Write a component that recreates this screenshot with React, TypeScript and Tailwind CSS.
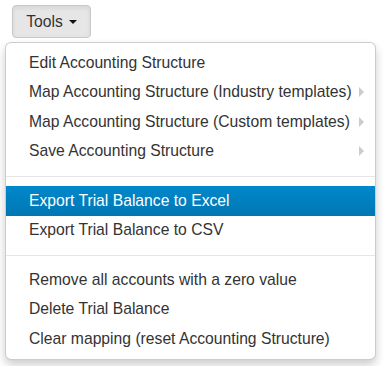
import React from "react";

type Item = { label: string; submenu?: boolean; active?: boolean };

const groups: Item[][] = [
  [
    { label: "Edit Accounting Structure" },
    { label: "Map Accounting Structure (Industry templates)", submenu: true },
    { label: "Map Accounting Structure (Custom templates)", submenu: true },
    { label: "Save Accounting Structure", submenu: true },
  ],
  [
    { label: "Export Trial Balance to Excel", active: true },
    { label: "Export Trial Balance to CSV" },
  ],
  [
    { label: "Remove all accounts with a zero value" },
    { label: "Delete Trial Balance" },
    { label: "Clear mapping (reset Accounting Structure)" },
  ],
];

const MenuItem: React.FC<{ item: Item }> = ({ item }) => (
  <div
    className={
      item.active
        ? "flex h-[29.5px] items-center justify-between pl-[23px] pr-[11px] text-white bg-gradient-to-b from-[#0088cc] to-[#0077b3]"
        : "flex h-[29.5px] items-center justify-between pl-[23px] pr-[11px] text-[#333]"
    }
  >
    <span className="whitespace-nowrap">{item.label}</span>
    {item.submenu && (
      <span className="ml-1 h-0 w-0 border-y-[5px] border-l-[5px] border-y-transparent border-l-[#ccc]" />
    )}
  </div>
);

export default function App() {
  return (
    <div className="relative h-[366px] w-[388px] overflow-hidden bg-white font-['Liberation_Sans',Arial,sans-serif] text-[15.7px]">
      <div className="pl-3 pt-[5px]">
        <button className="flex h-[33px] w-[79px] items-center justify-center gap-[6px] rounded-[4px] border border-[#c8c8c8] bg-[#e6e6e6] text-[#333] shadow-[inset_0_2px_4px_rgba(0,0,0,0.08)]">
          <span>Tools</span>
          <span className="mt-[1px] h-0 w-0 border-x-[4px] border-t-[4px] border-x-transparent border-t-[#111]" />
        </button>
      </div>

      {/* dropdown */}
      <div className="absolute left-[5px] top-[42px] w-[371px] rounded-[6px] border border-[rgba(0,0,0,0.2)] bg-white py-[5px] shadow-[0_5px_10px_rgba(0,0,0,0.2)]">
        {groups.map((g, gi) => (
          <div key={gi}>
            {gi > 0 && <div className="my-[9.5px] h-px bg-[#e5e5e5]" />}
            {g.map((it) => (
              <MenuItem key={it.label} item={it} />
            ))}
          </div>
        ))}
      </div>
    </div>
  );
}
